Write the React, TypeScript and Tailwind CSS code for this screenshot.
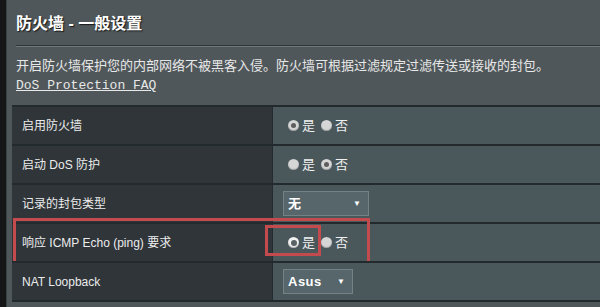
import * as React from "react"

const font = { fontFamily: '"Liberation Sans", "Noto Sans CJK SC", sans-serif' }

const Radio = ({ checked, ring }: { checked?: boolean; ring?: boolean }) => (
    <span
        className={
            "inline-flex items-center justify-center w-[11px] h-[11px] rounded-full shadow-[inset_0_-1px_1px_rgba(0,0,0,0.25)] " +
            (ring ? "bg-[#f2f2f2]" : "bg-[#d6d6d6]")
        }
    >
        {checked && (
            <span className={ring ? "w-[6px] h-[6px] rounded-full bg-[#5a6266]" : "w-[5px] h-[5px] rounded-full bg-[#5e5e5e]"} />
        )}
    </span>
)

const YesNo = ({ yes, ring }: { yes: boolean; ring?: boolean }) => (
    <div className="flex items-center pl-[15px] text-[13px] text-[#f0f0f0]">
        <Radio checked={yes} ring={ring && yes} />
        <span className="ml-[3px]">是</span>
        <span className="ml-[6px] flex items-center">
            <Radio checked={!yes} />
        </span>
        <span className="ml-[3px]">否</span>
    </div>
)

const Select = ({ value, width }: { value: string; width: string }) => (
    <div className={"ml-[10px] h-[25px] flex items-center justify-between px-[4px] bg-[#56666b] border border-[#728286] text-[13px] text-white " + width}>
        <span className="font-bold tracking-[0.5px]">{value}</span>
        <span className="text-[8px] mr-[3px]">▼</span>
    </div>
)

const Row = ({ label, children, className }: { label: string; children: React.ReactNode; className?: string }) => (
    <div className={"relative flex h-[39px] border-t-2 border-[#222a2d] " + (className ?? "")}>
        <div className="w-[260px] bg-[#2f3539] flex items-center pl-[10px] text-[12px] text-[#ececec]">{label}</div>
        <div className="flex-1 bg-[#4a585c] flex items-center border-l border-[#242b2e]">{children}</div>
    </div>
)

export default function App() {
    return (
        <div className="flex w-[600px] h-[307px] overflow-hidden bg-[#111314]" style={font}>
            {/* dark side strip */}
            <div className="w-[7px] bg-[#141618] border-r border-[#3a4144]" />

            {/* Panel */}
            <div className="flex-1 bg-[#4f575a] flex flex-col pt-[13px]">
                <h1 className="pl-[9px] h-[22px] leading-[22px] text-[16px] font-bold text-white [text-shadow:1px_1px_1px_#1a1a1a]">
                    防火墙 - 一般设置
                </h1>
                <div className="ml-[9px] mt-[10px] h-[2px] bg-[#2f3538] border-b border-[#6e777a]" />
                <p className="pl-[9px] mt-[10px] h-[18px] leading-[18px] text-[13px] text-[#e8e8e8] whitespace-nowrap">
                    开启防火墙保护您的内部网络不被黑客入侵。防火墙可根据过滤规定过滤传送或接收的封包。
                </p>
                <a
                    className="ml-[9px] mt-[2px] h-[18px] leading-[18px] text-[13px] text-[#e8e8e8] underline w-fit"
                    style={{ fontFamily: '"Liberation Mono", monospace' }}
                >
                    DoS Protection FAQ
                </a>

                {/* Table */}
                <div className="ml-[5px] mt-[10px] flex flex-col border-b-2 border-[#222a2d]">
                    <Row label="启用防火墙">
                        <YesNo yes={true} />
                    </Row>
                    <Row label="启动 DoS 防护">
                        <YesNo yes={false} />
                    </Row>
                    <Row label="记录的封包类型">
                        <Select value="无" width="w-[86px]" />
                    </Row>
                    <Row label="响应 ICMP Echo (ping) 要求">
                        <YesNo yes={true} ring />
                        {/* highlight boxes */}
                        <div className="absolute left-[1px] top-[-6px] w-[357px] h-[46px] border-[3px] border-[#c44b4d] pointer-events-none" />
                        <div className="absolute left-[253px] top-[1px] w-[56px] h-[31px] border-[3px] border-[#c44b4d] pointer-events-none" />
                    </Row>
                    <Row label="NAT Loopback">
                        <Select value="Asus" width="w-[70px]" />
                    </Row>
                </div>
            </div>
        </div>
    )
}
